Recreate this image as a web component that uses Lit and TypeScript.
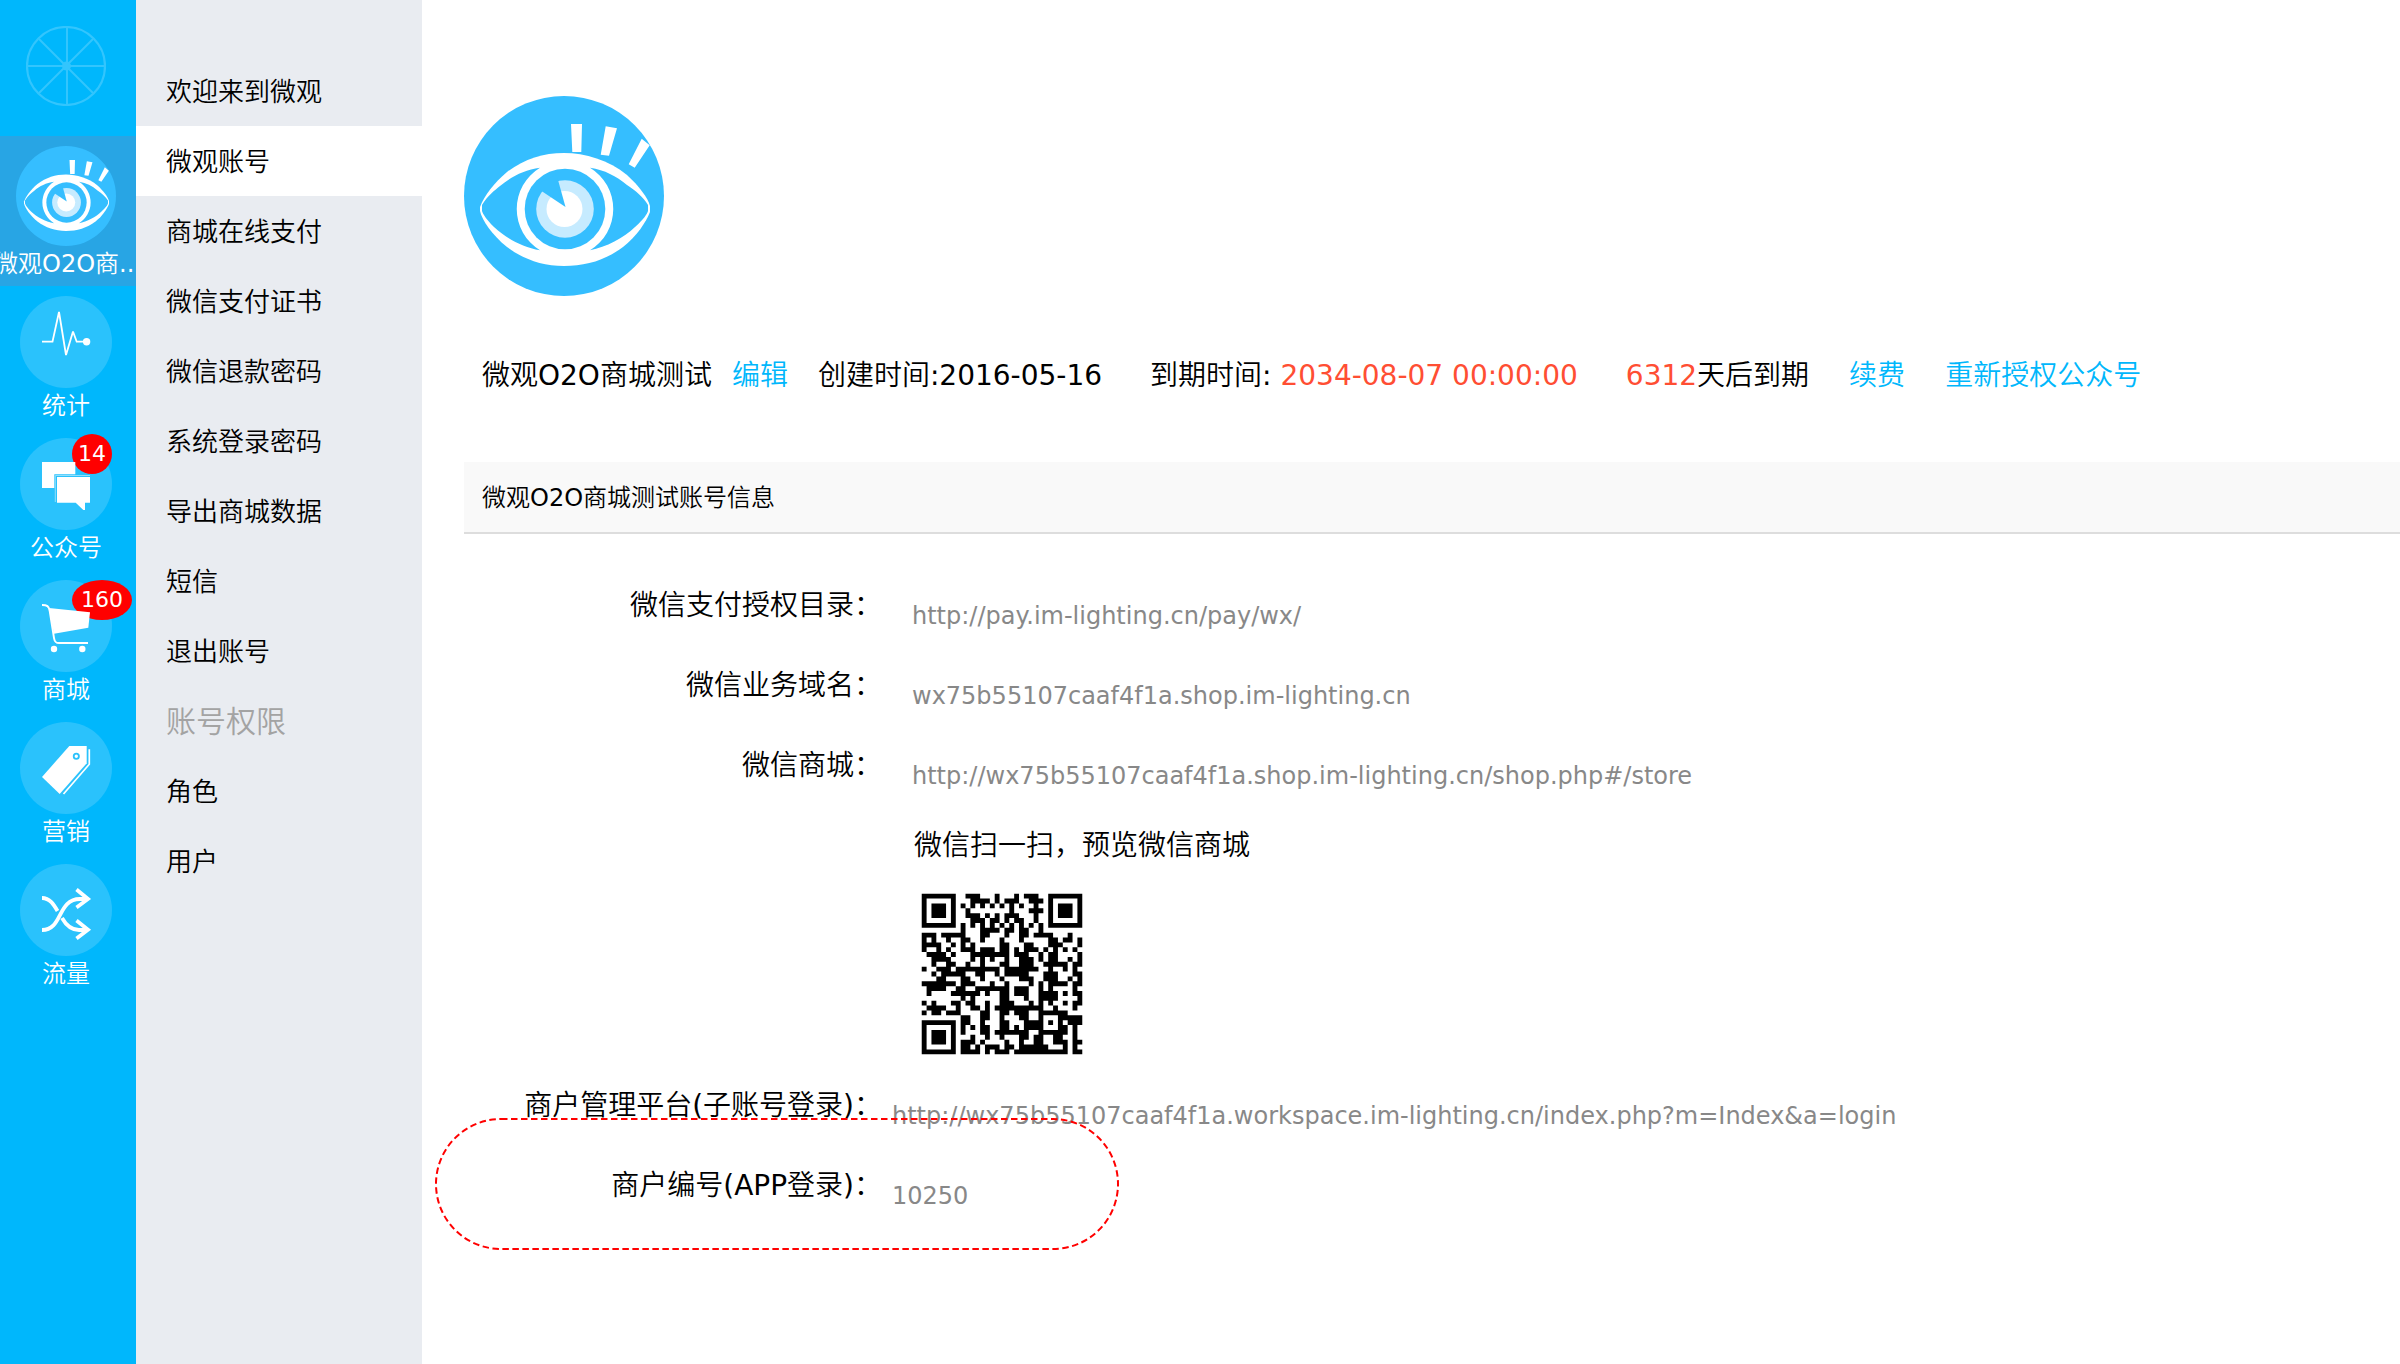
import { LitElement, html, svg, css } from "lit";
import { customElement, property } from "lit/decorators.js";
import { classMap } from "lit/directives/class-map.js";

/* ---------- QR encoding: version 4, level L, mask 0 ---------- */

const QR_SIZE = 33;
const QR_DATA = 80;
const QR_ECC = 20;
const QR_FORMAT = 0b111011111000100;

function gfMultiply(a: number, b: number): number {
  let r = 0;
  for (let i = 7; i >= 0; i--) {
    r = (r << 1) ^ ((r >>> 7) * 0x11d);
    r ^= ((b >>> i) & 1) * a;
  }
  return r & 0xff;
}

function eccFor(data: number[]): number[] {
  const gen: number[] = new Array(QR_ECC).fill(0);
  gen[QR_ECC - 1] = 1;
  let root = 1;
  for (let i = 0; i < QR_ECC; i++) {
    for (let j = 0; j < QR_ECC; j++) {
      gen[j] = gfMultiply(gen[j], root);
      if (j + 1 < QR_ECC) gen[j] ^= gen[j + 1];
    }
    root = gfMultiply(root, 2);
  }
  const rest: number[] = new Array(QR_ECC).fill(0);
  for (const b of data) {
    const factor = b ^ (rest.shift() as number);
    rest.push(0);
    gen.forEach((g, i) => (rest[i] ^= gfMultiply(g, factor)));
  }
  return rest;
}

function encodeQr(text: string): boolean[][] {
  const bytes = Array.from(new TextEncoder().encode(text));
  const bits: number[] = [];
  const push = (value: number, len: number) => {
    for (let i = len - 1; i >= 0; i--) bits.push((value >>> i) & 1);
  };
  push(4, 4);
  push(bytes.length, 8);
  bytes.forEach((b) => push(b, 8));
  push(0, 4);
  const data: number[] = [];
  for (let i = 0; i < bits.length; i += 8) {
    data.push(parseInt(bits.slice(i, i + 8).join(""), 2));
  }
  for (let pad = 0xec; data.length < QR_DATA; pad ^= 0xec ^ 0x11) data.push(pad);
  const words = [...data, ...eccFor(data)];

  const grid = Array.from({ length: QR_SIZE }, () => new Array<boolean>(QR_SIZE).fill(false));
  const fixed = Array.from({ length: QR_SIZE }, () => new Array<boolean>(QR_SIZE).fill(false));
  const set = (x: number, y: number, on: boolean) => {
    if (x < 0 || y < 0 || x >= QR_SIZE || y >= QR_SIZE) return;
    grid[y][x] = on;
    fixed[y][x] = true;
  };
  for (let i = 0; i < QR_SIZE; i++) {
    set(6, i, i % 2 === 0);
    set(i, 6, i % 2 === 0);
  }
  for (const [cx, cy] of [[3, 3], [QR_SIZE - 4, 3], [3, QR_SIZE - 4]]) {
    for (let dy = -4; dy <= 4; dy++) {
      for (let dx = -4; dx <= 4; dx++) {
        const d = Math.max(Math.abs(dx), Math.abs(dy));
        set(cx + dx, cy + dy, d !== 2 && d !== 4);
      }
    }
  }
  for (let dy = -2; dy <= 2; dy++) {
    for (let dx = -2; dx <= 2; dx++) {
      set(26 + dx, 26 + dy, Math.max(Math.abs(dx), Math.abs(dy)) !== 1);
    }
  }
  const fmt = (i: number) => ((QR_FORMAT >>> i) & 1) !== 0;
  for (let i = 0; i <= 5; i++) set(8, i, fmt(i));
  set(8, 7, fmt(6));
  set(8, 8, fmt(7));
  set(7, 8, fmt(8));
  for (let i = 9; i < 15; i++) set(14 - i, 8, fmt(i));
  for (let i = 0; i < 8; i++) set(QR_SIZE - 1 - i, 8, fmt(i));
  for (let i = 8; i < 15; i++) set(8, QR_SIZE - 15 + i, fmt(i));
  set(8, QR_SIZE - 8, true);

  let k = 0;
  for (let right = QR_SIZE - 1; right >= 1; right -= 2) {
    if (right === 6) right = 5;
    const upward = ((right + 1) & 2) === 0;
    for (let v = 0; v < QR_SIZE; v++) {
      for (let j = 0; j < 2; j++) {
        const x = right - j;
        const y = upward ? QR_SIZE - 1 - v : v;
        if (fixed[y][x]) continue;
        const bit = k < words.length * 8 ? (words[k >>> 3] >>> (7 - (k & 7))) & 1 : 0;
        k++;
        grid[y][x] = (bit === 1) !== ((x + y) % 2 === 0);
      }
    }
  }
  return grid;
}

@customElement("qr-code")
export class QrCode extends LitElement {
  @property() value = "";
  @property() label = "";

  static styles = css`
    :host { display: block; }
    svg { display: block; width: 100%; height: 100%; }
  `;

  render() {
    let d = "";
    encodeQr(this.value).forEach((row, y) => {
      for (let x = 0; x < row.length; x++) {
        if (!row[x]) continue;
        let end = x;
        while (row[end]) end++;
        d += `M${x + 2} ${y + 2}h${end - x}v1h${x - end}z`;
        x = end;
      }
    });
    return html`<svg viewBox="0 0 37 37" role="img" aria-label=${this.label}>
      <path d=${d} fill="#000" />
    </svg>`;
  }
}

/* ---------- Icons ---------- */

@customElement("eye-logo")
export class EyeLogo extends LitElement {
  static styles = css`
    :host { display: block; }
    svg { display: block; width: 100%; height: 100%; }
  `;

  render() {
    return html`<svg viewBox="0 0 200 200" aria-hidden="true">
      <circle cx="100" cy="100" r="100" fill="#35beff" />
      <path fill="#fff" d="M107 28H118L117.300 56H108.300ZM141.700 30.300L153 32.300L145 59.700L136.700 58.700ZM177.700 42.700L185.700 49.300L170.700 71.700L164.700 68.300Z" />
      <path fill="#fff" d="M16 111C20 100 30 87 43 76C60 63 79 57 100 57C121 57 145 64 163 79C175 90 184 102 186 110V116C182 126 173 140 159 151C142 164 122 170 100 170C78 170 59 163 43 151C28 139 18 124 16 115Z" />
      <path fill="#35beff" d="M18 109C24 99 30 95 36 90C48 80 60 74 76 71.700A48.300 48.300 0 0 0 76 154.300C58 151 42 142 30 131C22 123 19 118 18 115Z" />
      <path fill="#35beff" d="M184 109C179 101 172 95 163 89C152 80 141 74 126 71.700A48.300 48.300 0 0 1 126 154.300C142 151 160 142 171 131C180 123 183 118 184 115Z" />
      <circle cx="101" cy="113" r="40.300" fill="#35beff" />
      <circle cx="101" cy="113" r="28.800" fill="#c6ebff" />
      <circle cx="100.500" cy="113" r="18" fill="#fff" />
      <path fill="#35beff" d="M101.500 111L92.500 78.600L70 90Z" />
    </svg>`;
  }
}

const icons = {
  stats: svg`<path d="M22 45.700H32.500L39 16L46 59L53 35.500L56.700 45.700H66" fill="none" stroke="#fff" stroke-width="1.800" stroke-miterlimit="3" />
    <circle cx="66.600" cy="45.700" r="3.700" fill="#fff" />`,
  chat: svg`<path fill="#fff" d="M22 24H55.300V36.300H34.300V50H22ZM37 39H70V64.700H65V72H63.300L55.700 64.700H37Z" />
    <path d="M35.300 64V37.500H70" fill="none" stroke="#8fdffd" stroke-width="1" />`,
  cart: svg`<path d="M22 25C27 25 29 26 29.700 31L34 58C34.600 61.500 35.500 63 39 63H68" fill="none" stroke="#fff" stroke-width="1.900" />
    <path fill="#fff" d="M29 28L70 32.300L68.300 47.700L34 53.700Z" />
    <circle cx="34" cy="69" r="3.200" fill="#fff" /><circle cx="62.300" cy="69" r="3.200" fill="#fff" />`,
  tag: svg`<path fill="#fff" d="M49.300 24H66.700V41.300L39.700 72L22 55Z" />
    <path d="M69.300 27.300V42.300L43.500 72" fill="none" stroke="#fff" stroke-width="1.700" />
    <circle cx="56.300" cy="34.300" r="2.600" fill="#fff" stroke="#2ac2fc" stroke-width="1.800" />`,
  shuffle: svg`<g fill="none" stroke="#fff" stroke-width="3.800">
      <path d="M22 34C30 34 34 41 37.500 47M42 54C46 61 51 66 59 66H67" />
      <path d="M22 66C43 66 37 35 60 35H67" />
      <path d="M56.500 25.500L68 35L56.500 43.500M56.500 56.500L68 65.700L56.500 74.500" />
    </g>`,
};

interface NavItem {
  icon: keyof typeof icons;
  text: string;
  badge?: string;
  raised?: boolean;
}

const navItems: NavItem[] = [
  { icon: "stats", text: "统计" },
  { icon: "chat", text: "公众号", badge: "14", raised: true },
  { icon: "cart", text: "商城", badge: "160" },
  { icon: "tag", text: "营销" },
  { icon: "shuffle", text: "流量" },
];

const menuItems = [
  "欢迎来到微观", "微观账号", "商城在线支付", "微信支付证书", "微信退款密码",
  "系统登录密码", "导出商城数据", "短信", "退出账号",
];
const roleItems = ["角色", "用户"];

const STORE_URL = "http://wx75b55107caaf4f1a.shop.im-lighting.cn/shop.php#/store";
const WORKSPACE_URL = "http://wx75b55107caaf4f1a.workspace.im-lighting.cn/index.php?m=Index&a=login";

@customElement("app-root")
export class AppRoot extends LitElement {
  static styles = css`
    :host {
      display: flex;
      min-height: 100vh;
      background: #fff;
      color: #000;
      font-family: "DejaVu Sans", "Noto Sans CJK SC DemiLight", "Noto Sans CJK SC Light", "Noto Sans CJK SC", sans-serif;
      font-size: 28px;
    }
    * { box-sizing: border-box; }
    a { color: inherit; text-decoration: none; }
    h1, h2, h3, p, dl, dd, dt, ul { margin: 0; padding: 0; font-weight: 400; }
    ul { list-style: none; }

    .rail {
      flex: none;
      width: 136px;
      background: #00b7fc;
      color: #fff;
      font-size: 24px;
      line-height: 36px;
    }
    .wheel { display: block; width: 80px; height: 80px; margin: 26px 26px 30px; }
    .shop {
      display: flex;
      flex-direction: column;
      align-items: center;
      height: 150px;
      padding: 10px 4px 0 0;
      overflow: hidden;
      background: #28a5e4;
      white-space: nowrap;
    }
    .shop-logo { width: 100px; height: 100px; }
    .shop-name { padding-left: 4px; }
    .tile {
      display: flex;
      flex-direction: column;
      align-items: center;
      height: 142px;
      padding: 10px 4px 0 0;
    }
    .disc {
      position: relative;
      width: 92px;
      height: 92px;
      border-radius: 50%;
      background: #2ac2fc;
    }
    .disc svg { position: relative; display: block; width: 92px; height: 92px; }
    .badge {
      position: absolute;
      left: 52px;
      top: 0;
      min-width: 40px;
      padding: 0 9px;
      border-radius: 50%;
      background: #f00;
      font-size: 22px;
      line-height: 40px;
      text-align: center;
    }
    .badge.raised { top: -4px; padding: 0; }

    .menu {
      flex: none;
      width: 286px;
      padding-top: 56px;
      background: #e9ecf1;
      font-size: 26px;
      line-height: 72px;
    }
    .menu a, .menu h2 { display: block; height: 70px; padding-left: 30px; }
    .menu h2 { font-size: 30px; color: #a3a3a3; }
    .menu .current { background: #fff; }

    .main { flex: 1; min-width: 0; padding: 96px 0 0 42px; }
    .avatar { width: 200px; height: 200px; }
    .summary {
      display: flex;
      padding: 52px 0 58px 18px;
      line-height: 56px;
      white-space: nowrap;
    }
    .summary h1 { font-size: 28px; }
    .link { color: #00b7fc; }
    .due { color: #ff4e33; }
    .gap-s { margin-left: 20px; }
    .gap-m { margin-left: 30px; }
    .gap-l { margin-left: 40px; }
    .gap-xl { margin-left: 48px; }
    .section {
      height: 72px;
      padding-left: 18px;
      border-bottom: 2px solid #ddd;
      background: #f9f9f9;
      font-size: 24px;
      line-height: 72px;
    }
    .details { padding-top: 30px; white-space: nowrap; }
    .row { position: relative; display: flex; gap: 30px; height: 80px; }
    .row.near { gap: 10px; }
    .row dt { flex: none; width: 418px; line-height: 84px; text-align: right; }
    .row dd { color: #888; font-size: 24px; line-height: 56px; padding-top: 24px; }
    .scan { padding-left: 448px; }
    .scan p { height: 80px; padding-left: 2px; line-height: 84px; }
    .qr { width: 180px; height: 180px; }
    .marker {
      position: absolute;
      left: -29px;
      top: -27px;
      width: 684px;
      height: 134px;
      pointer-events: none;
    }
  `;

  private row(label: string, value: string, near = false, marked = false) {
    return html`<div class=${classMap({ row: true, near })}>
      <dt>${label}</dt>
      <dd>${value}</dd>
      ${marked
        ? html`<svg class="marker" viewBox="0 0 684 134" aria-hidden="true">
            <rect x="1" y="2" width="682" height="130" rx="65" fill="none" stroke="#f00" stroke-width="2" stroke-dasharray="6.500 3.500" />
          </svg>`
        : null}
    </div>`;
  }

  render() {
    return html`
      <nav class="rail">
        <svg class="wheel" viewBox="0 0 80 80" fill="none" stroke="#33c5fd" aria-hidden="true">
          <circle cx="40" cy="40" r="39" stroke-width="2.200" />
          <path d="M41 1V79M1 40H79M13 13L67 67M67 13L13 67" stroke-width="2" />
          <circle cx="40.500" cy="40" r="4.500" fill="#33c5fd" stroke="none" />
        </svg>
        <a class="shop" href="#shop">
          <eye-logo class="shop-logo"></eye-logo>
          <span class="shop-name">微观O2O商...</span>
        </a>
        ${navItems.map(
          (item) => html`<a class="tile" href="#${item.icon}">
            <span class="disc">
              ${item.badge
                ? html`<span class=${classMap({ badge: true, raised: !!item.raised })}>${item.badge}</span>`
                : null}
              <svg viewBox="0 0 92 92" aria-hidden="true">${icons[item.icon]}</svg>
            </span>
            <span>${item.text}</span>
          </a>`,
        )}
      </nav>
      <nav class="menu">
        <ul>
          ${menuItems.map(
            (text, i) => html`<li><a href="#menu-${i}" class=${classMap({ current: i === 1 })}>${text}</a></li>`,
          )}
        </ul>
        <h2>账号权限</h2>
        <ul>
          ${roleItems.map((text, i) => html`<li><a href="#role-${i}">${text}</a></li>`)}
        </ul>
      </nav>
      <main class="main">
        <eye-logo class="avatar"></eye-logo>
        <div class="summary">
          <h1>微观O2O商城测试</h1>
          <a class="link gap-s" href="#edit">编辑</a>
          <span class="gap-m">创建时间:2016-05-16</span>
          <span class="gap-xl">到期时间: <span class="due">2034-08-07 00:00:00</span></span>
          <span class="gap-xl"><span class="due">6312</span>天后到期</span>
          <a class="link gap-l" href="#renew">续费</a>
          <a class="link gap-l" href="#authorize">重新授权公众号</a>
        </div>
        <h3 class="section">微观O2O商城测试账号信息</h3>
        <dl class="details">
          ${this.row("微信支付授权目录：", "http://pay.im-lighting.cn/pay/wx/")}
          ${this.row("微信业务域名：", "wx75b55107caaf4f1a.shop.im-lighting.cn")}
          ${this.row("微信商城：", STORE_URL)}
          <div class="scan">
            <p>微信扫一扫，预览微信商城</p>
            <qr-code class="qr" .value=${WORKSPACE_URL} .label=${"微信商城"}></qr-code>
          </div>
          ${this.row("商户管理平台(子账号登录)：", WORKSPACE_URL, true)}
          ${this.row("商户编号(APP登录)：", "10250", true, true)}
        </dl>
      </main>
    `;
  }
}
